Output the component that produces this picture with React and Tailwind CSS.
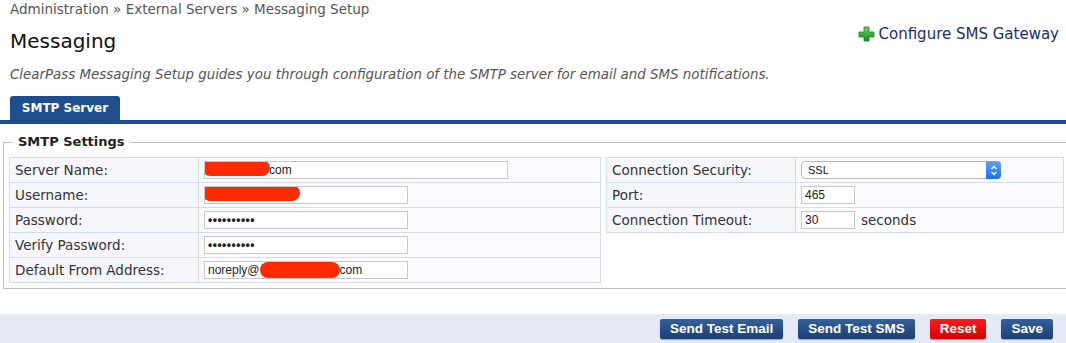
import React from 'react';

const labelFont = { fontFamily: '"DejaVu Sans", Verdana, sans-serif' };

const Blob = ({ width }) => (
  <span className="inline-block h-[16px] rounded-full bg-[#ff2a00]" style={{ width }} />
);

const FakeInput = ({ width, children }) => (
  <div
    className="flex h-[18px] items-center overflow-hidden border border-[#c8c8c8] bg-white pl-[3px] text-[12px] text-[#222]"
    style={{ width, fontFamily: '"Liberation Sans", Arial, sans-serif' }}
  >
    {children}
  </div>
);

const Dots = () => (
  <span className="text-[12px] font-bold leading-none tracking-[0.5px]">••••••••••</span>
);

const PlusIcon = () => (
  <svg width="17" height="16" viewBox="0 0 17 16">
    <defs>
      <linearGradient id="pg" x1="0" y1="0" x2="0" y2="1">
        <stop offset="0" stopColor="#6fd36a" />
        <stop offset="1" stopColor="#148a1f" />
      </linearGradient>
    </defs>
    <path
      d="M6 1h5v5h5v5h-5v4H6v-4H1V6h5z"
      fill="url(#pg)"
      stroke="#1b7d22"
      strokeWidth="0.8"
      strokeLinejoin="round"
    />
  </svg>
);

const Button = ({ children, red }) => (
  <button
    className={
      'h-[20px] rounded-[2px] px-[10px] text-[13.5px] font-bold leading-none text-white shadow-[0_1px_1px_rgba(0,0,0,0.3)] ' +
      (red
        ? 'bg-gradient-to-b from-[#ff1a1a] to-[#d60000]'
        : 'bg-gradient-to-b from-[#34609c] to-[#1c3f74]')
    }
    style={{ fontFamily: '"Liberation Sans", Arial, sans-serif' }}
  >
    {children}
  </button>
);

const leftRows = [
  {
    label: 'Server Name:',
    field: (
      <FakeInput width={304}>
        <span className="-ml-[6px]">
          <Blob width={68} />
        </span>
        <span className="-ml-[1px]">com</span>
      </FakeInput>
    ),
  },
  {
    label: 'Username:',
    field: (
      <FakeInput width={204}>
        <span className="-ml-[6px]">
          <Blob width={98} />
        </span>
      </FakeInput>
    ),
  },
  { label: 'Password:', field: <FakeInput width={204}><Dots /></FakeInput> },
  { label: 'Verify Password:', field: <FakeInput width={204}><Dots /></FakeInput> },
  {
    label: 'Default From Address:',
    field: (
      <FakeInput width={204}>
        <span>noreply@</span>
        <Blob width={80} />
        <span>com</span>
      </FakeInput>
    ),
  },
];

const App = () => {
  return (
    <div className="h-[343px] w-[1066px] overflow-hidden bg-white" style={labelFont}>
      {/* Header */}
      <div className="flex items-start justify-between pl-[10px] pr-[7px]">
        <div>
          <div className="pt-px text-[13.5px] leading-[16px] text-[#555]">
            Administration » External Servers » Messaging Setup
          </div>
          <h1 className="mt-[12px] text-[20px] leading-[24px] text-[#111]">Messaging</h1>
        </div>
        <a className="mt-[23px] flex items-center gap-[4px] text-[15px] text-[#1e2a78]" href="#">
          <PlusIcon />
          Configure SMS Gateway
        </a>
      </div>
      <p className="mt-[14px] pl-[10px] text-[13.4px] italic leading-[16px] text-[#555]">
        ClearPass Messaging Setup guides you through configuration of the SMTP server for email and
        SMS notifications.
      </p>

      {/* Tabs */}
      <div className="mt-[13px] pl-[10px]">
        <div className="flex h-[24px] w-[110px] items-center justify-center rounded-t-[3px] bg-[#1f4e8f] text-[12px] font-bold text-white">
          SMTP Server
        </div>
      </div>
      <div className="h-[4px] bg-[#1f4e8f]" />

      {/* Fieldset */}
      <fieldset className="-mr-[4px] ml-[3px] mt-[10px] border border-[#b9bdc9] pb-[5px] pl-[5px] pr-[6px] pt-0">
        <legend className="ml-[4px] px-[5px] text-[13px] font-bold leading-[16px] text-[#222]">
          SMTP Settings
        </legend>
        <div className="mt-[7px] flex items-start gap-[5px]">
          <table className="w-[592px] border-collapse text-[13.5px] text-[#333]">
            <tbody>
              {leftRows.map((row) => (
                <tr key={row.label} className="h-[25px]">
                  <td className="w-[189px] border border-[#d3dbee] bg-[#f6f7fc] pl-[5px] align-middle">
                    {row.label}
                  </td>
                  <td className="border border-[#d3dbee] bg-[#fbfbff] pl-[5px] align-middle">
                    {row.field}
                  </td>
                </tr>
              ))}
            </tbody>
          </table>

          <table className="w-[458px] border-collapse text-[13.5px] text-[#333]">
            <tbody>
              <tr className="h-[25px]">
                <td className="w-[189px] border border-[#d3dbee] bg-[#f6f7fc] pl-[5px]">
                  Connection Security:
                </td>
                <td className="border border-[#d3dbee] bg-[#fbfbff] pl-[5px]">
                  <div className="flex h-[18px] w-[200px] items-center justify-between rounded-[4px] border border-[#b9b9b9] bg-white pl-[6px] text-[11px] text-[#111]">
                    <span style={{ fontFamily: '"Liberation Sans", Arial, sans-serif' }}>SSL</span>
                    <span className="-mr-px flex h-[18px] w-[15px] items-center justify-center rounded-r-[4px] bg-gradient-to-b from-[#5aa2fb] to-[#1a6ef0]">
                      <svg width="8" height="11" viewBox="0 0 8 11">
                        <path
                          d="M1.5 4 4 1.5 6.5 4M1.5 7 4 9.5 6.5 7"
                          fill="none"
                          stroke="white"
                          strokeWidth="1.3"
                        />
                      </svg>
                    </span>
                  </div>
                </td>
              </tr>
              <tr className="h-[25px]">
                <td className="border border-[#d3dbee] bg-[#f6f7fc] pl-[5px]">Port:</td>
                <td className="border border-[#d3dbee] bg-[#fbfbff] pl-[5px]">
                  <FakeInput width={54}>465</FakeInput>
                </td>
              </tr>
              <tr className="h-[25px]">
                <td className="border border-[#d3dbee] bg-[#f6f7fc] pl-[5px]">
                  Connection Timeout:
                </td>
                <td className="border border-[#d3dbee] bg-[#fbfbff] pl-[5px]">
                  <div className="flex items-center gap-[6px]">
                    <FakeInput width={54}>30</FakeInput>
                    <span>seconds</span>
                  </div>
                </td>
              </tr>
            </tbody>
          </table>
        </div>
      </fieldset>

      {/* Footer */}
      <div className="mt-[25px] flex h-[30px] items-center justify-end gap-[15px] bg-[#e6eaf6] pr-[13px]">
        <Button>Send Test Email</Button>
        <Button>Send Test SMS</Button>
        <Button red>Reset</Button>
        <Button>Save</Button>
      </div>
    </div>
  );
};

export default App;
